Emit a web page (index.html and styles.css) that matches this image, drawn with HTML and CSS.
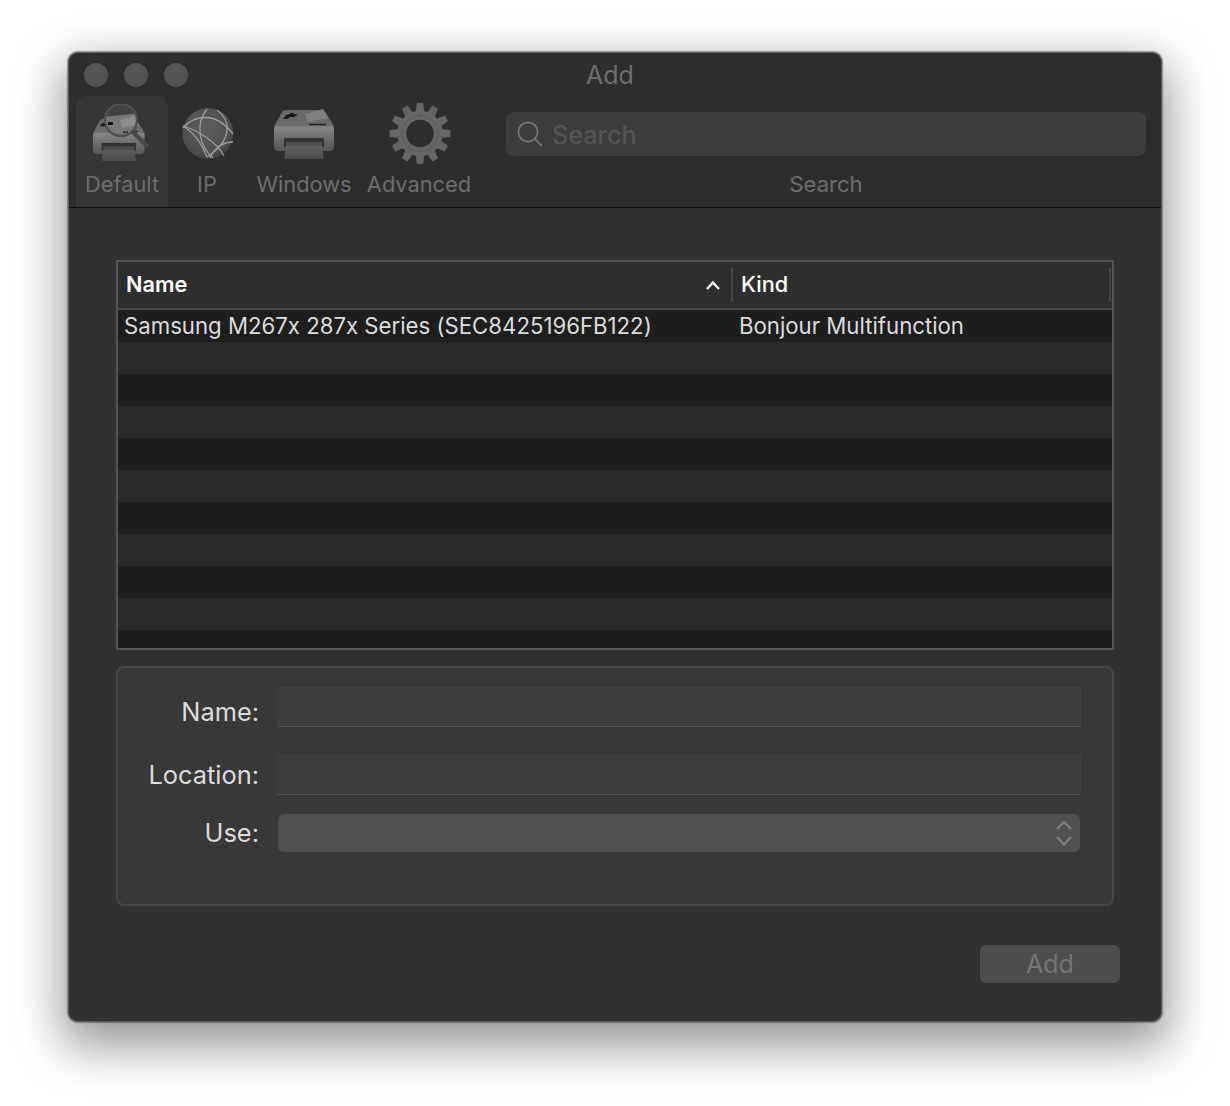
FILE: index.html
```html
<!DOCTYPE html>
<html lang="en">
<head>
<meta charset="utf-8">
<title>Add</title>
<link rel="stylesheet" href="styles.css">
</head>
<body>
<main class="window">
  <header class="toolbar">
    <div class="titlebar">
      <div class="lights"><span class="light"></span><span class="light"></span><span class="light"></span></div>
      <div class="title">Add</div>
      <div class="titlebar-end"></div>
    </div>
    <div class="tools">
      <div class="tool tool-default active">
        <svg class="icon" width="60" height="64" viewBox="0 0 60 64">
          <defs>
            <linearGradient id="body" x1="0" y1="0" x2="0" y2="1"><stop offset="0" stop-color="#686868"/><stop offset=".38" stop-color="#6c6c6c"/><stop offset=".42" stop-color="#858585"/><stop offset=".62" stop-color="#737373"/><stop offset="1" stop-color="#565656"/></linearGradient>
            <linearGradient id="tray" x1="0" y1="0" x2="0" y2="1"><stop offset="0" stop-color="#5f5f5f"/><stop offset="1" stop-color="#4a4a4a"/></linearGradient>
            <radialGradient id="sphere" cx=".45" cy=".4" r=".65"><stop offset="0" stop-color="#5e5e5e"/><stop offset=".75" stop-color="#4e4e4e"/><stop offset="1" stop-color="#3a3a3a"/></radialGradient>
            <clipPath id="lens-clip"><circle cx="29" cy="16" r="15.5"/></clipPath>
            <g id="printer">
              <path d="M8 3 Q9 1 12 1 L48 1 Q50 1 52 4 L58 14 Q60 17 60 20 L60 37 Q60 42 55 42 L5 42 Q0 42 0 37 L0 20 Q0 17 2 14 Z" fill="url(#body)"/>
              <rect x="10" y="29" width="40" height="9" fill="#333"/>
              <rect x="12" y="33" width="36" height="4" fill="#4e4e4e"/>
              <path d="M12 37 L48 37 L50 49 Q50 50 48 50 L12 50 Q10 50 10 49 Z" fill="url(#tray)"/>
              <path d="M9 10 L12 6 L16 5 L18 3.500 L20 5 L24 6 L20 8 L16 8 L13 10 Z" fill="#1a1a1a"/>
              <path d="M31 5 L49 0 L54 9 L34 13 Z" fill="#808080"/>
              <path d="M35 15.500 H52" stroke="#202020" stroke-width="1.300"/>
            </g>
          </defs>
          <use href="#printer" transform="translate(1 14) scale(.86)"/>
          <circle cx="29" cy="16" r="15.500" fill="#424242"/>
          <g clip-path="url(#lens-clip)">
            <path d="M10 13 L50 9 L50 34 L10 34 Z" fill="#787878"/>
            <path d="M28 16 L45 11 L46 21 L30 24 Z" fill="#8c8c8c"/>
            <path d="M16 18 h5 v3 h-5 z M31 27.500 h5 v1.200 h-5 z M40 27 h3 v1.500 h-3 z" fill="#151515"/>
          </g>
          <circle cx="29" cy="16" r="16" fill="none" stroke="#505050" stroke-width="2.400"/>
          <path d="M41 28 L56 43" stroke="#4a4a4a" stroke-width="4.500"/>
          <path d="M8 22 L11 19 L13 21" fill="none" stroke="#151515" stroke-width="1"/>
        </svg>
        <span class="tool-label">Default</span>
      </div>
      <div class="tool tool-ip">
        <svg class="icon" width="60" height="64" viewBox="0 0 60 64">
          <circle cx="31" cy="29.500" r="25.500" fill="url(#sphere)"/>
          <g fill="none" stroke="#9e9e9e" stroke-width="1.300">
            <path d="M6 22 C16 28 24 38 30 53"/>
            <path d="M40 6 C54 16 56 36 30 53"/>
            <path d="M6 24 C16 12 38 6 56 30"/>
            <path d="M6 22 C20 26 40 38 47 52"/>
            <path d="M30 5 C18 20 22 42 36 54"/>
            <path d="M33 54 C38 42 48 38 56 38"/>
          </g>
        </svg>
        <span class="tool-label">IP</span>
      </div>
      <div class="tool tool-windows">
        <svg class="icon" width="60" height="64" viewBox="0 0 60 64"><use href="#printer" transform="translate(0 5)"/></svg>
        <span class="tool-label">Windows</span>
      </div>
      <div class="tool tool-advanced">
        <svg class="icon" width="64" height="64" viewBox="-33 -32.500 64 64">
          <g fill="#666">
            <path id="tooth" d="M-4.500 -20 L-3.200 -30.500 H3.200 L4.500 -20 Z"/>
            <use href="#tooth" transform="rotate(30)"/><use href="#tooth" transform="rotate(60)"/>
            <use href="#tooth" transform="rotate(90)"/><use href="#tooth" transform="rotate(120)"/>
            <use href="#tooth" transform="rotate(150)"/><use href="#tooth" transform="rotate(180)"/>
            <use href="#tooth" transform="rotate(210)"/><use href="#tooth" transform="rotate(240)"/>
            <use href="#tooth" transform="rotate(270)"/><use href="#tooth" transform="rotate(300)"/>
            <use href="#tooth" transform="rotate(330)"/>
          </g>
          <circle r="18.250" fill="none" stroke="#666" stroke-width="9"/>
          <circle r="18" fill="none" stroke="#5a5a5a" stroke-width="1"/>
        </svg>
        <span class="tool-label">Advanced</span>
      </div>
      <div class="search-tool">
        <div class="search-field">
          <svg class="search-icon" width="26" height="26" viewBox="0 0 26 26"><circle cx="11" cy="11" r="9.600" fill="none" stroke="#757575" stroke-width="1.800"/><path d="M18 18 L25 25" stroke="#757575" stroke-width="1.800"/></svg>
          <span class="search-placeholder">Search</span>
        </div>
        <span class="tool-label search-label">Search</span>
      </div>
    </div>
  </header>

  <section class="content">
    <div class="table">
      <div class="table-head">
        <div class="head-cell head-name"><span>Name</span>
          <svg class="sort" width="16" height="10" viewBox="0 0 16 10"><path d="M2 9 L8 2.500 L14 9" fill="none" stroke="#fff" stroke-width="2.400"/></svg>
        </div>
        <div class="head-cell head-kind"><span>Kind</span></div>
      </div>
      <div class="rows">
        <div class="row"><span class="cell-name">Samsung M267x 287x Series (SEC8425196FB122)</span><span class="cell-kind">Bonjour Multifunction</span></div>
        <div class="row"></div><div class="row"></div><div class="row"></div><div class="row"></div>
        <div class="row"></div><div class="row"></div><div class="row"></div><div class="row"></div>
        <div class="row"></div><div class="row"></div>
      </div>
    </div>

    <div class="group">
      <div class="form-row row-name"><label class="form-label">Name:</label><div class="input"></div></div>
      <div class="form-row row-location"><label class="form-label">Location:</label><div class="input"></div></div>
      <div class="form-row row-use"><label class="form-label">Use:</label>
        <div class="popup">
          <svg width="18" height="28" viewBox="0 0 18 28"><path d="M2 10 L9 3 L16 10 M2 18 L9 25.500 L16 18" fill="none" stroke="#7e7e7e" stroke-width="2.400"/></svg>
        </div>
      </div>
    </div>

    <div class="actions"><button class="add-button" type="button">Add</button></div>
  </section>
</main>
</body>
</html>
```
FILE: styles.css
```css
* { box-sizing: border-box; }
html, body { margin: 0; height: 100%; }
body {
  width: 1230px;
  height: 1106px;
  padding: 52px 68px 0;
  background: #fff;
  font-family: Inter, "Liberation Sans", sans-serif;
  font-feature-settings: "calt" 0;
  overflow: hidden;
}
.window {
  width: 1094px;
  height: 970px;
  display: flex;
  flex-direction: column;
  border: 1px solid #5c5c5c;
  border-top-color: #666;
  border-radius: 10px;
  background: #323232;
  box-shadow: 0 0 1px 1px rgba(0,0,0,.35), 0 18px 48px 6px rgba(0,0,0,.42);
  overflow: hidden;
}
.toolbar {
  height: 155px;
  flex: none;
  background: #2d2d2d;
  border-bottom: 1px solid #0c0c0c;
  display: flex;
  flex-direction: column;
}
.titlebar {
  height: 43px;
  flex: none;
  display: grid;
  grid-template-columns: 1fr auto 1fr;
  align-items: center;
  padding: 0 25px 0 15px;
}
.lights { display: flex; gap: 16px; }
.light { width: 24px; height: 24px; border-radius: 50%; background: #545454; }
.title { color: #6f6f6f; font-size: 25px; line-height: 44px; }
.tools { flex: 1; display: flex; padding-left: 7px; }
.tool {
  display: flex;
  flex-direction: column;
  align-items: center;
  height: 111px;
  padding-top: 8px;
}
.tool .icon { flex: none; height: 64px; }
.tool-default { width: 92px; }
.tool-ip { width: 78px; }
.tool-windows { width: 116px; }
.tool-advanced { width: 114px; padding-top: 5px; }
.tool-advanced .icon { margin-bottom: 3px; }
.tool.active { background: #363636; border-radius: 10px 10px 0 0; }
.tool-label { color: #6e6e6e; font-size: 21.800px; line-height: 26px; margin-top: 3px; white-space: nowrap; }
.search-tool {
  width: 640px;
  margin-left: 30px;
  display: flex;
  flex-direction: column;
  align-items: center;
  padding-top: 16px;
}
.search-field {
  width: 100%;
  height: 44px;
  border-radius: 8px;
  background: #3d3d3d;
  display: flex;
  align-items: center;
  padding-left: 11px;
  gap: 9px;
}
.search-icon { flex: none; }
.search-placeholder { color: #555; font-size: 25.200px; font-weight: 500; padding-top: 2px; }
.search-tool .search-label { margin-top: 15px; font-size: 22px; }

.content { flex: 1; padding: 52px 47px 0; display: flex; flex-direction: column; }
.table {
  height: 390px;
  flex: none;
  border: 2px solid #565656;
  display: flex;
  flex-direction: column;
  background: #1e1e1e;
}
.table-head {
  height: 48px;
  flex: none;
  display: flex;
  align-items: center;
  background: #2e2e2e;
  border-bottom: 2px solid #484848;
  color: #fff;
  font-size: 21.700px;
  font-weight: 600;
}
.head-cell { height: 34px; display: flex; align-items: center; justify-content: space-between; padding-bottom: 2px; }
.head-name { width: 615px; padding-left: 8px; padding-right: 10px; border-right: 2px solid #484848; }
.head-kind { flex: 1; padding-left: 8px; border-right: 2px solid #484848; margin-right: 1px; font-weight: 500; }
.sort { margin-top: 2px; }
.rows { flex: 1; overflow: hidden; }
.row {
  height: 32px;
  display: flex;
  align-items: center;
  color: #dcdcdc;
  font-size: 22.200px;
  padding-bottom: 2px;
  background: #1e1e1e;
  white-space: nowrap;
}
.row:nth-child(even) { background: #2a2a2a; }
.cell-name { width: 615px; padding-left: 6px; }
.cell-kind { padding-left: 6px; }

.group {
  margin-top: 16px;
  height: 240px;
  flex: none;
  border: 2px solid #484848;
  border-radius: 8px;
  background: #383838;
  padding: 19px 31px 0 0;
  display: flex;
  flex-direction: column;
}
.form-row { display: flex; align-items: center; }
.row-name { height: 40px; }
.row-name .form-label { margin-top: 10px; }
.row-location { height: 40px; margin-top: 28px; }
.row-use { height: 38px; margin-top: 19px; }
.form-label { width: 141px; text-align: right; color: #dcdcdc; font-size: 25.400px; flex: none; padding-bottom: 2px; }
.input {
  flex: 1;
  height: 100%;
  margin-left: 18px;
  background: #3c3c3c;
  border: 1px solid #404040;
  border-bottom: 1px solid #505050;
}
.popup {
  flex: 1;
  height: 100%;
  margin-left: 19px;
  margin-right: 1px;
  border-radius: 6px;
  background: #505050;
  display: flex;
  align-items: center;
  justify-content: flex-end;
  padding-right: 7px;
}
.actions { display: flex; justify-content: flex-end; margin-top: 39px; margin-right: -6px; }
.add-button {
  width: 140px;
  height: 38px;
  border: 0;
  border-radius: 6px;
  background: #4d4d4d;
  color: #767676;
  font: 25px Inter, "Liberation Sans", sans-serif;
  padding: 0;
}
```
